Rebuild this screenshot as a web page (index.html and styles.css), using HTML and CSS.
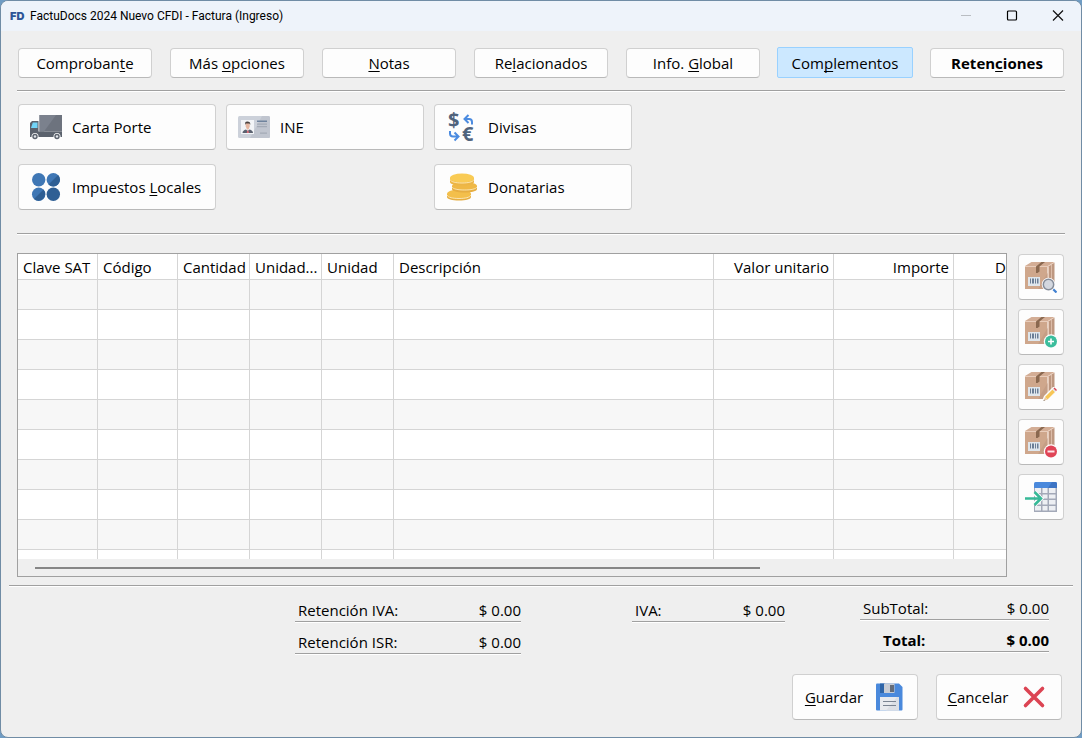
FILE: index.html
```html
<!DOCTYPE html>
<html lang="es">
<head>
<meta charset="utf-8">
<title>FactuDocs 2024 Nuevo CFDI - Factura (Ingreso)</title>
<link rel="stylesheet" href="styles.css">
</head>
<body>
<svg class="defs" aria-hidden="true">
  <symbol id="box" viewBox="0 0 32 32">
    <path fill="#d3ad95" d="M0 5 6.500 1H29.500L23 5z"/>
    <path fill="#cfa78c" d="M0 5.500H22.500V28H0z"/>
    <path fill="#bd9780" d="M23 5.500 29.500 1.500V22L23 28z"/>
    <path fill="#c59e85" d="M13 28 22.500 12V28z"/>
    <path fill="none" stroke="#e9cdbb" stroke-width="1" d="M0 5.500H23L29 1.500M23.500 6V28"/>
    <path fill="none" stroke="#dcbca8" stroke-width="1" d="M26.500 4V25"/>
    <path fill="#8a684f" d="M16.500 1H20L14.500 5.500V10.500L12.500 12H11V5.500z"/>
    <path fill="#dfe6ec" d="M3 16H15V25H3z"/>
    <path fill="#6b7e96" d="M5 17.500h1v5H5zM7 17.500h2v5H7zM10 17.500h1v5h-1zM12 17.500h1.500v5H12z"/>
  </symbol>
</svg>
<div class="window">
  <header class="titlebar">
    <span class="logo">FD</span>
    <h1 class="title">FactuDocs 2024 Nuevo CFDI - Factura (Ingreso)</h1>
    <button class="caption" type="button" aria-label="Minimizar" disabled><svg width="12" height="12" viewBox="0 0 12 12"><path d="M1 5.500H11" stroke="#b9bdc2"/></svg></button>
    <button class="caption" type="button" aria-label="Maximizar"><svg width="12" height="12" viewBox="0 0 12 12"><rect x="1.500" y="1" width="9" height="9" rx="1" fill="none" stroke="#000" stroke-width="1.200"/></svg></button>
    <button class="caption" type="button" aria-label="Cerrar"><svg width="12" height="12" viewBox="0 0 12 12"><path d="M1 .5 11 10.500M11 .5 1 10.500" stroke="#111" stroke-width="1.200"/></svg></button>
  </header>

  <nav class="tabs">
    <button class="btn" type="button"><span>Comproban<u>t</u>e</span></button>
    <button class="btn" type="button"><span>Más <u>o</u>pciones</span></button>
    <button class="btn" type="button"><span><u>N</u>otas</span></button>
    <button class="btn" type="button"><span>Re<u>l</u>acionados</span></button>
    <button class="btn" type="button"><span>Info. <u>G</u>lobal</span></button>
    <button class="btn active" type="button"><span>Com<u>p</u>lementos</span></button>
    <button class="btn strong" type="button"><span>Reten<u>c</u>iones</span></button>
  </nav>
  <hr class="rule">

  <section class="complements">
    <button class="btn tool" type="button">
      <svg class="icon" viewBox="0 0 32 32">
        <path fill="#6d737e" d="M9.500 4H32V20.500H9.500z"/><path fill="#7b818d" d="M9.500 4H26L14 20.500H9.500z"/>
        <path fill="#5b626d" d="M0 12 2 10H8.500V20.500H32V26H0z"/>
        <path fill="#71d4f7" d="M2.800 11.500H7.500V17H1z"/>
        <circle cx="5" cy="25.500" r="3.500" fill="#fdfdfd"/><circle cx="5" cy="25.500" r="2.700" fill="#5b626d"/><circle cx="5" cy="25.500" r="1.200" fill="#e4e7eb"/>
        <circle cx="27" cy="25.500" r="3.500" fill="#fdfdfd"/><circle cx="27" cy="25.500" r="2.700" fill="#5b626d"/><circle cx="27" cy="25.500" r="1.200" fill="#e4e7eb"/>
      </svg><span>Carta Porte</span></button>
    <button class="btn tool" type="button">
      <svg class="icon" viewBox="0 0 32 32">
        <rect y="5" width="32" height="22" rx="1.500" fill="#ccd1da"/><path fill="#c0c5cf" d="M24 5h6.500a1.500 1.500 0 0 1 1.500 1.500v19a1.500 1.500 0 0 1-1.500 1.500H12z"/>
        <path fill="#f2f4f7" d="M3 9H16V23H3z"/>
        <path fill="#e6b8a2" d="M7.700 12h4v3.500L10.500 18.500h-1.500L7.700 15.500z"/><path fill="#4b4340" d="M7.200 14v-2.500Q7.500 10.500 9.700 10.500T12.200 12V14L11.500 12.500H8z"/>
        <path fill="#5b6270" d="M4.500 22Q4.500 19.500 8 18.500L9.700 20 11.500 18.500Q15 19.500 15 22z"/><path fill="#d86a75" d="M9.200 19.500h1.200L11 22H8.800z"/>
        <path fill="#6f839d" d="M19 9.500H29V11H19z"/><path fill="#a3aab6" d="M19 12.500H29V13.700H19zM19 15H29V16.200H19zM22 21.500H29V22.700H22z"/>
      </svg><span>INE</span></button>
    <button class="btn tool" type="button">
      <svg class="icon currency" viewBox="0 0 32 32">
        <text x="2" y="16" font-size="20" class="coin">$</text><text x="16" y="30" font-size="20" class="coin">€</text>
        <path fill="none" stroke="#4b8be0" stroke-width="2" d="M26 13.500V11Q26 8 23 8H19M22.500 4 18.500 8 22.500 12M4 20V22.500Q4 25.500 7 25.500H12M8.500 21.500 12.500 25.500 8.500 29.500"/>
      </svg><span>Divisas</span></button>
    <button class="btn tool" type="button">
      <svg class="icon" viewBox="0 0 32 32">
        <g fill="#3f77b5"><circle cx="8.700" cy="8.700" r="6.700"/><circle cx="23.300" cy="8.700" r="6.700"/><circle cx="8.700" cy="23.300" r="6.700"/></g>
        <path fill="#2f5f94" d="M28.100 4A6.700 6.700 0 0 1 18.500 13.400zM13.500 18.600A6.700 6.700 0 0 1 4 28z"/><circle cx="23.300" cy="23.300" r="6.700" fill="#2f5f94"/>
      </svg><span>Impuestos <u>L</u>ocales</span></button>
    <button class="btn tool donations" type="button">
      <svg class="icon" viewBox="0 0 32 32">
        <path fill="#e6ae42" d="M1 23v3c0 2 5 3.500 12 3.500S25 28 25 26v-3z"/><ellipse cx="13" cy="23" rx="12" ry="4.500" fill="#f3bf4b"/>
        <path fill="none" stroke="#fff1c9" stroke-width=".8" d="M1 24c1 2.500 6 3.500 12 3.500s11-1 12-3.500"/>
        <path fill="#e6ae42" d="M6 15v3c0 2 5 3.500 12.500 3.500S31 20 31 18v-3z"/><ellipse cx="18.500" cy="15" rx="12.500" ry="4" fill="#efb846"/>
        <path fill="none" stroke="#fff1c9" stroke-width=".8" d="M6 16c1 2 6 3 12.500 3s11.500-1 12.500-3"/>
        <path fill="#ecb546" d="M4 7v4c0 2 5 3.500 12 3.500S28 13 28 11V7z"/><ellipse cx="16" cy="7" rx="12" ry="4.500" fill="#f9cb55"/>
        <path fill="none" stroke="#fff1c9" stroke-width=".8" d="M4 8.500c1 2.500 6 3.500 12 3.500s11-1 12-3.500"/>
      </svg><span>Donatarias</span></button>
  </section>
  <hr class="rule">

  <main class="items">
    <div class="grid">
      <div class="viewport">
        <table class="lines">
          <colgroup><col class="c80"><col class="c80"><col class="c72"><col class="c72"><col class="c72"><col class="c320"><col class="c120"><col class="c120"><col></colgroup>
          <thead><tr><th>Clave SAT</th><th>Código</th><th>Cantidad</th><th>Unidad...</th><th>Unidad</th><th>Descripción</th><th class="num">Valor unitario</th><th class="num">Importe</th><th class="num cut">D</th></tr></thead>
          <tbody>
            <tr><td></td><td></td><td></td><td></td><td></td><td></td><td></td><td></td><td></td></tr>
            <tr><td></td><td></td><td></td><td></td><td></td><td></td><td></td><td></td><td></td></tr>
            <tr><td></td><td></td><td></td><td></td><td></td><td></td><td></td><td></td><td></td></tr>
            <tr><td></td><td></td><td></td><td></td><td></td><td></td><td></td><td></td><td></td></tr>
            <tr><td></td><td></td><td></td><td></td><td></td><td></td><td></td><td></td><td></td></tr>
            <tr><td></td><td></td><td></td><td></td><td></td><td></td><td></td><td></td><td></td></tr>
            <tr><td></td><td></td><td></td><td></td><td></td><td></td><td></td><td></td><td></td></tr>
            <tr><td></td><td></td><td></td><td></td><td></td><td></td><td></td><td></td><td></td></tr>
            <tr><td></td><td></td><td></td><td></td><td></td><td></td><td></td><td></td><td></td></tr>
            <tr><td></td><td></td><td></td><td></td><td></td><td></td><td></td><td></td><td></td></tr>
          </tbody>
        </table>
      </div>
      <div class="scrollbar"><div class="thumb"></div></div>
    </div>
    <aside class="actions">
      <button class="btn square" type="button" aria-label="Buscar producto"><svg class="icon" viewBox="0 0 32 32"><use href="#box"/>
        <path d="M27.500 27.500 31.500 31.500" stroke="#3f7fd0" stroke-width="2.200"/><circle cx="23.500" cy="23.500" r="6.800" fill="#fdfdfd"/><circle cx="23.500" cy="23.500" r="5.200" fill="#d3d7df" stroke="#858c99" stroke-width="1.500"/></svg></button>
      <button class="btn square" type="button" aria-label="Agregar producto"><svg class="icon" viewBox="0 0 32 32"><use href="#box"/>
        <circle cx="26" cy="25.500" r="7.200" fill="#fdfdfd"/><circle cx="26" cy="25.500" r="6" fill="#3bbd9c"/><path d="M26 22.500v6M23 25.500h6" stroke="#fff" stroke-width="1.600"/></svg></button>
      <button class="btn square" type="button" aria-label="Editar producto"><svg class="icon" viewBox="0 0 32 32"><use href="#box"/>
        <path fill="#fdfdfd" d="M17 30 19 25 28 16H32V20L22 30z"/><path fill="#f7c656" d="M20 26 27.500 18.500 30 21 22.500 28.500z"/><path fill="#dfe3e8" d="M27.500 18.500 28.500 17.500 31 20 30 21z"/><path fill="#d94452" d="M28.500 17.500 29.500 16.500 32 19 31 20z"/><path fill="#ecc9a0" d="M20 26 22.500 28.500 18.500 30z"/><path fill="#555" d="M19 28.700 19.800 29.500 18.500 30z"/></svg></button>
      <button class="btn square" type="button" aria-label="Quitar producto"><svg class="icon" viewBox="0 0 32 32"><use href="#box"/>
        <circle cx="26" cy="25.500" r="7.200" fill="#fdfdfd"/><circle cx="26" cy="25.500" r="6" fill="#e04456"/><path d="M22.500 25.500h7" stroke="#ffe5e8" stroke-width="2"/></svg></button>
      <button class="btn square" type="button" aria-label="Importar tabla"><svg class="icon" viewBox="0 0 32 32">
        <path fill="#a3a9b8" d="M9 6H32V31H9z"/>
        <path fill="#edeff3" d="M10 7h6v5h-6zM17.500 7h5v5h-5zM24 7h6.500v5H24zM10 13.500h6v4h-6zM17.500 13.500h5v4h-5zM24 13.500h6.500v4H24zM10 19h6v4.500h-6zM17.500 19h5v4.500h-5zM24 19h6.500v4.500H24zM10 25h6v4.500h-6zM17.500 25h5v4.500h-5zM24 25h6.500v4.500H24z"/>
        <path fill="#4a89dc" d="M9 2.500Q9 1 10.500 1H30.500Q32 1 32 2.500V7H9z"/><path fill="#3d74c4" d="M27 1H30.500Q32 1 32 2.500V7H23z"/>
        <path fill="none" stroke="#fdfdfd" stroke-width="5" d="M9.500 11.500 15.500 17.500 9.500 23.500"/><path fill="none" stroke="#37b998" stroke-width="2.600" d="M0 17.500H15.500M9.500 11 16 17.500 9.500 24"/></svg></button>
    </aside>
  </main>
  <hr class="rule wide">

  <section class="totals">
    <dl class="group retained">
      <div class="total"><dt>Retención IVA:</dt><dd>$ 0.00</dd></div>
      <div class="total"><dt>Retención ISR:</dt><dd>$ 0.00</dd></div>
    </dl>
    <dl class="group vat">
      <div class="total"><dt>IVA:</dt><dd>$ 0.00</dd></div>
    </dl>
    <dl class="group sums">
      <div class="total"><dt>SubTotal:</dt><dd>$ 0.00</dd></div>
      <div class="total grand"><dt>Total:</dt><dd>$ 0.00</dd></div>
    </dl>
  </section>

  <footer class="footer">
    <button class="btn final" type="button"><span><u>G</u>uardar</span>
      <svg class="icon" viewBox="0 0 32 32"><path fill="#4a89dc" d="M3 3.500Q3 2.500 4 2.500H26L29.500 6V28.500Q29.500 29.500 28.500 29.500H4Q3 29.500 3 28.500z"/><path fill="#2f65a8" d="M7 2.500H12V12H7z"/><path fill="#c9cdd5" d="M11 2.500H21.500V12H11z"/><path fill="#646c79" d="M17 4H21V11H17z"/><path fill="#e8eaee" d="M7 16H26V29.500H7z"/><path fill="#dcdfe5" d="M24 16h2V29.500H13z"/><path d="M10 20.500H23M10 24.500H23" stroke="#7b8492"/></svg></button>
    <button class="btn final" type="button"><span><u>C</u>ancelar</span>
      <svg class="icon" viewBox="0 0 32 32"><path d="M7.500 7.500 24.500 24.500M24.500 7.500 7.500 24.500" stroke="#dc4453" stroke-width="3.600" stroke-linecap="round"/></svg></button>
  </footer>
</div>
</body>
</html>
```
FILE: styles.css
```css
* { box-sizing: border-box; }

body {
  margin: 0;
  background: #6f9cc4;
  color: #000;
  font: 15px/20px "Open Sans", "Noto Sans", sans-serif;
}

.defs { display: none; }

.window {
  display: flex;
  flex-direction: column;
  height: 100vh;
  min-height: 620px;
  border: 1px solid #708ca5;
  border-radius: 8px;
  overflow: hidden;
  background: #efefef;
}

button { font: inherit; color: inherit; }

.titlebar {
  display: flex;
  align-items: center;
  height: 30px;
  flex: none;
  padding-left: 9px;
  background: #eef3fa;
}
.logo {
  width: 20px;
  font: 900 11px/16px Inter, sans-serif;
  color: #2d5597;
}
.title {
  flex: 1;
  margin: 0;
  font: 400 12px/20px Roboto, "Open Sans", sans-serif;
}
.caption {
  display: grid;
  place-items: center;
  width: 46px;
  height: 30px;
  padding: 0;
  border: 0;
  background: none;
}

.btn {
  display: flex;
  align-items: center;
  justify-content: center;
  padding: 0;
  border: 1px solid #d0d0d0;
  border-bottom-color: #b9b9b9;
  border-radius: 4px;
  background: #fdfdfd;
  white-space: nowrap;
}
.btn u {
  text-decoration-thickness: 1px;
  text-underline-offset: 2px;
  text-decoration-skip-ink: none;
}
.icon { width: 32px; height: 32px; flex: none; }
.currency { overflow: visible; }
.coin { font-family: "Open Sans", sans-serif; font-weight: 700; fill: #50637c; }

.tabs {
  display: grid;
  grid-template-columns: repeat(7, 1fr);
  gap: 18px;
  padding: 17px 17px 12px;
}
.tabs .btn { height: 30px; }
.tabs .active {
  margin: -1px -1px 0;
  height: 31px;
  border-color: #99d1ff;
  border-radius: 2px;
  background: #cce8ff;
}
.tabs .strong { font-weight: 700; }

.rule {
  flex: none;
  width: auto;
  height: 2px;
  margin: 0 16px;
  border: 0;
  border-top: 1px solid #a0a0a0;
  background: #fff;
}
.rule.wide { margin: 8px 8px 0; }

.complements {
  display: grid;
  grid-template-columns: repeat(3, 198px);
  gap: 14px 10px;
  padding: 12px 17px 23px;
}
.tool {
  justify-content: flex-start;
  gap: 10px;
  height: 46px;
  padding: 0 11px;
}
.donations { grid-column: 3; }

.items {
  display: flex;
  flex: 1;
  min-height: 0;
  gap: 11px;
  padding: 18px 17px 0 16px;
}
.grid {
  display: flex;
  flex: 1;
  flex-direction: column;
  min-width: 0;
  border: 1px solid #a0a0a0;
}
.viewport {
  flex: 1;
  min-height: 0;
  overflow: hidden;
  background: #fff;
}
.lines {
  width: 100%;
  table-layout: fixed;
  border-collapse: separate;
  border-spacing: 0;
}
.c72 { width: 72px; }
.c80 { width: 80px; }
.c120 { width: 120px; }
.c320 { width: 320px; }
.lines th, .lines td {
  padding: 0 4px 0 5px;
  border: solid #d5d5d5;
  border-width: 0 1px 1px 0;
  white-space: nowrap;
}
.lines th { height: 26px; font-weight: 400; text-align: left; }
.lines td { height: 30px; }
.lines th:last-child, .lines td:last-child { border-right: 0; }
.lines .num { text-align: right; }
.lines .cut { padding: 0; }
.lines tbody tr:nth-child(odd) { background: #f7f7f7; }
.scrollbar { height: 17px; padding: 8px 17px 0; }
.thumb { width: 76%; height: 2px; background: #868686; }

.actions {
  display: flex;
  flex-direction: column;
  gap: 9px;
  padding-top: 1px;
}
.square { width: 46px; height: 46px; }

.totals {
  display: flex;
  justify-content: flex-end;
  padding: 1px 32px 0 0;
}
.group { margin: 2px 0 0; }
.retained { width: 226px; margin-right: 111px; }
.vat { width: 153px; margin-right: 75px; }
.sums { width: 189px; margin-top: 0; }
.total {
  display: flex;
  justify-content: space-between;
  align-items: flex-end;
  height: 32px;
  padding: 0 0 1px 3px;
  border-bottom: 1px solid #a0a0a0;
  box-shadow: 0 1px #fff;
}
.total dd { margin: 0; }
.grand { margin-left: 20px; font-weight: 700; }

.footer {
  display: flex;
  justify-content: flex-end;
  gap: 18px;
  padding: 20px 19px 17px;
}
.final { width: 126px; height: 46px; gap: 10px; }
```
